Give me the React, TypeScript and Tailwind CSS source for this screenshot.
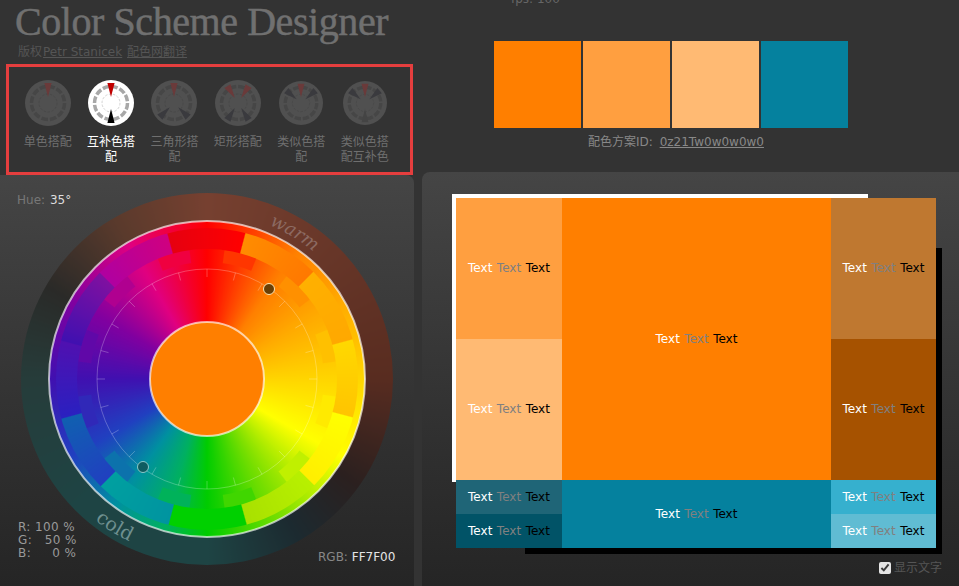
type Rgb = [number, number, number];

const hex = (s: string): Rgb => [
  parseInt(s.slice(1, 3), 16),
  parseInt(s.slice(3, 5), 16),
  parseInt(s.slice(5, 7), 16),
];

const mix = (c0: string, c1: string, k: number) => {
  const x = hex(c0);
  const y = hex(c1);
  return `rgb(${x.map((v, j) => Math.round(v + (y[j] - v) * k)).join(",")})`;
};

const sample = (stops: [number, string][], a: number) => {
  const t = ((a % 360) + 360) % 360;
  for (let i = 0; i < stops.length - 1; i++) {
    const [a0, c0] = stops[i];
    const [a1, c1] = stops[i + 1];
    if (t >= a0 && t <= a1) return mix(c0, c1, (t - a0) / (a1 - a0));
  }
  return stops[0][1];
};

// angles go clockwise from the top of the wheel
const hueStops: [number, string][] = [
  [0, "#ff0000"], [35, "#ff7f00"], [60, "#ffaa00"], [90, "#ffd500"], [120, "#ffff00"],
  [150, "#80e000"], [180, "#00cc00"], [196, "#00b060"], [216, "#0090a0"], [240, "#2040c0"],
  [270, "#4010b0"], [300, "#8000a0"], [330, "#e00080"], [360, "#ff0000"],
];

const ringStops: [number, string][] = [
  [0, "#764030"], [90, "#582c20"], [125, "#2b201f"], [150, "#1c2a30"], [180, "#1e4444"],
  [225, "#1e4444"], [270, "#263c3a"], [300, "#2a2a28"], [330, "#5a3a2c"], [360, "#764030"],
];

// stepped outer band: start and end colour of each 30 degree sector, first one starts at 345
const sectors: [string, string][] = [
  ["#e60010", "#ff0000"], ["#ff8c00", "#ff7800"], ["#ffb000", "#ffa800"], ["#ffd800", "#ffc400"],
  ["#ffff00", "#ffee00"], ["#b8f000", "#a8e000"], ["#00d000", "#00d000"], ["#0094a0", "#00a0a0"],
  ["#2040c0", "#1060b0"], ["#2a20c0", "#5010b0"], ["#4010b0", "#8010a0"], ["#b000a0", "#d0007f"],
];

const outerColor = (a: number) => {
  const off = (a + 15) % 360;
  const i = Math.floor(off / 30) % 12;
  return mix(sectors[i][0], sectors[i][1], (off % 30) / 30);
};

// teeth of flat colour sit on every sector boundary, the rest follows the smooth wheel
const midColor = (a: number) => {
  const off = (((a - 15) % 30) + 30) % 30;
  if (off > 7 && off < 23) return sample(hueStops, a);
  const k = Math.round((a - 15) / 30);
  return sample(hueStops, 15 + k * 30);
};

const conic = (fn: (a: number) => string) => {
  const parts: string[] = [];
  for (let a = 0; a <= 360; a += 0.5) parts.push(`${fn(a)} ${a}deg`);
  return `conic-gradient(${parts.join(",")})`;
};

const polar = (r: number, a: number) => {
  const rad = (a * Math.PI) / 180;
  return [186 + r * Math.sin(rad), 186 - r * Math.cos(rad)];
};

const smooth = conic((a) => sample(hueStops, a));

const discs = [
  { r: 186, bg: conic((a) => sample(ringStops, a)) },
  { r: 158, bg: smooth },
  { r: 151, bg: conic(outerColor) },
  { r: 130, bg: conic(midColor) },
  { r: 117, bg: smooth },
];

function Wheel() {
  return (
    <div className="relative h-[372px] w-[372px]">
      {discs.map((d) => (
        <div
          key={d.r}
          className="absolute rounded-full"
          style={{ left: 186 - d.r, top: 186 - d.r, width: d.r * 2, height: d.r * 2, background: d.bg }}
        />
      ))}
      <svg width="372" height="372" viewBox="0 0 372 372" className="absolute left-0 top-0">
        <circle cx="186" cy="186" r="110" fill="none" stroke="#ffffff" strokeOpacity="0.25" />
        {Array.from({ length: 24 }, (_, i) => {
          const [x0, y0] = polar(110, i * 15);
          const [x1, y1] = polar(102, i * 15);
          return <line key={i} x1={x0} y1={y0} x2={x1} y2={y1} stroke="#ffffff" strokeOpacity="0.25" />;
        })}
        <circle cx="186" cy="186" r="158" fill="none" stroke="#ffffff" strokeOpacity="0.65" strokeWidth="2" />
        <circle cx="186" cy="186" r="57" fill="#ff7f00" stroke="#ffffff" strokeOpacity="0.65" strokeWidth="2" />
        <circle cx="248" cy="96" r="5.5" fill="#6b3f05" stroke="#ffe6b0" />
        <circle cx="122" cy="274" r="5.5" fill="#0f5c60" stroke="#8cc8c8" />
        <defs>
          <path id="warm-arc" d={`M${polar(166, 1).join(" ")}A166 166 0 0 1 ${polar(166, 61).join(" ")}`} />
          <path id="cold-arc" d={`M${polar(180, 242).join(" ")}A180 180 0 0 0 ${polar(180, 182).join(" ")}`} />
        </defs>
        <text fill="#8c6a62" fontSize="18" fontFamily="DejaVu Serif, serif" fontStyle="italic">
          <textPath href="#warm-arc" startOffset="50%" textAnchor="middle">warm</textPath>
        </text>
        <text fill="#6f9090" fontSize="19" fontFamily="DejaVu Serif, serif">
          <textPath href="#cold-arc" startOffset="50%" textAnchor="middle">cold</textPath>
        </text>
      </svg>
    </div>
  );
}

const schemes = [
  { label: "单色搭配", red: [0], dark: [] as number[], size: 46 },
  { label: "互补色搭配", red: [0], dark: [180], active: true, size: 46 },
  { label: "三角形搭配", red: [0], dark: [135, 225], size: 46 },
  { label: "矩形搭配", red: [-32, 32], dark: [148, 212], size: 46 },
  { label: "类似色搭配", red: [0], dark: [-50, 50], size: 44 },
  { label: "类似色搭配互补色", red: [0], dark: [-50, 50, 180], size: 44 },
];

function SchemeIcon({ red, dark, active, size }: { red: number[]; dark: number[]; active?: boolean; size: number }) {
  const tip = (a: number) => {
    const rad = (a * Math.PI) / 180;
    const pt = (r: number, s: number) => [
      23 + r * Math.sin(rad) + s * Math.cos(rad),
      23 - r * Math.cos(rad) + s * Math.sin(rad),
    ];
    return [pt(20, -3.6), pt(20, 3.6), pt(6, 0)].map((p) => p.join(",")).join(" ");
  };
  return (
    <svg width={size} height={size} viewBox="0 0 46 46">
      <circle cx="23" cy="23" r="23" fill={active ? "#ffffff" : "#505050"} />
      <circle cx="23" cy="23" r="16.5" fill="none" stroke={active ? "#a8a8a8" : "#464646"} strokeWidth="3.5" strokeDasharray="6.6 2" />
      <circle cx="23" cy="23" r="9" fill="none" stroke={active ? "#d4d4d4" : "#494949"} strokeDasharray="2.5 1.5" />
      {red.map((a) => (
        <polygon key={a} points={tip(a)} fill={active ? "#c00000" : "#6a3a3a"} />
      ))}
      {dark.map((a) => (
        <polygon key={a} points={tip(a)} fill={active ? "#000000" : a === 180 ? "#444444" : "#3a3a3e"} />
      ))}
    </svg>
  );
}

function Cell({ bg, className }: { bg: string; className: string }) {
  return (
    <div className={`flex items-center justify-center gap-[4.5px] pb-[1px] text-[12px] ${bg} ${className}`}>
      <span className="text-white">Text</span>
      <span className="text-[#808080]">Text</span>
      <span className="text-black">Text</span>
    </div>
  );
}

export default function App() {
  return (
    <div className="flex h-[586px] w-[959px] overflow-hidden bg-[#333333] font-['DejaVu_Sans','Noto_Sans_CJK_SC',sans-serif]">
      <div className="flex w-[414px] shrink-0 flex-col">
        <h1 className="h-[44px] pl-[15px] pt-[1px] font-['Liberation_Serif',serif] text-[40px] leading-[42px] tracking-[-0.43px] text-[#707070] [-webkit-text-stroke:0.5px_#707070]">
          Color Scheme Designer
        </h1>
        <div className="h-[20px] pl-[18px] pt-[1px] text-xs leading-[15px] text-[#555555]">
          版权<span className="ml-[1px] underline">Petr Stanicek</span> <span className="ml-[1px] underline">配色网翻译</span>
        </div>
        <div className="ml-[6px] flex h-[111px] w-[407px] shrink-0 border-[3px] border-[#e53e3e] pl-[7px] pt-[13px]">
          {schemes.map((s) => (
            <div key={s.label} className="flex w-[63.4px] flex-col items-center">
              <div className="flex h-[46px] items-center">
                <SchemeIcon red={s.red} dark={s.dark} active={s.active} size={s.size} />
              </div>
              <div className={`mt-[9px] w-[50px] text-center text-xs leading-[15px] ${s.active ? "text-white" : "text-[#6f6f6f]"}`}>
                {s.label}
              </div>
            </div>
          ))}
        </div>
        <div className="relative flex-1 rounded-tr-lg bg-gradient-to-b from-[#454545] to-[#252525] pl-[21px] pt-[18px]">
          <Wheel />
          <div className="absolute left-[17px] top-[17px] text-xs text-[#777777]">
            Hue: <span className="ml-[1px] text-[#dddddd]">35°</span>
          </div>
          <pre className="absolute left-[18px] top-[346px] font-['DejaVu_Sans',sans-serif] text-xs leading-[13px] tracking-[0.4px] text-[#999999]">
            {"R: 100 %\nG:   50 %\nB:     0 %"}
          </pre>
          <div className="absolute left-[318px] top-[374px] text-xs text-[#888888]">
            RGB: <span className="text-[#e5e5e5]">FF7F00</span>
          </div>
        </div>
      </div>

      <div className="ml-[8px] flex min-w-0 flex-1 flex-col">
        <div className="h-[172px] shrink-0 pl-[72px]">
          <div className="-mt-[9px] h-[50px] pl-[17px] text-xs leading-[16px] text-[#666666]">fps: 100</div>
          <div className="flex gap-[2px]">
            <div className="h-[87px] w-[87px] bg-[#ff7f00]" />
            <div className="h-[87px] w-[87px] bg-[#ff9f40]" />
            <div className="h-[87px] w-[87px] bg-[#ffba73]" />
            <div className="h-[87px] w-[87px] bg-[#05819e]" />
          </div>
          <div className="mt-[6px] pl-[94px] text-xs leading-[16px] text-[#888888]">
            配色方案ID: <span className="ml-[3px] underline">0z21Tw0w0w0w0</span>
          </div>
        </div>
        <div className="flex-1 rounded-tl-lg bg-gradient-to-b from-[#454545] to-[#252525] pl-[34px] pt-[26px]">
          <div className="relative h-[350px] w-[480px]">
            <div className="absolute -left-[4px] -top-[4px] h-[288px] w-[416px] bg-white" />
            <div className="absolute left-[69px] top-[50px] h-[306px] w-[417px] bg-black" />
            <div className="relative grid h-full w-full grid-cols-[106px_269px_105px] grid-rows-[141px_141px_34px_34px]">
              <Cell bg="bg-[#ff9f40]" className="" />
              <Cell bg="bg-[#ff7f00]" className="row-span-2" />
              <Cell bg="bg-[#bf7830]" className="" />
              <Cell bg="bg-[#ffba73]" className="" />
              <Cell bg="bg-[#a65200]" className="" />
              <Cell bg="bg-[#1f6577]" className="" />
              <Cell bg="bg-[#05819e]" className="row-span-2" />
              <Cell bg="bg-[#36b0ce]" className="" />
              <Cell bg="bg-[#015367]" className="" />
              <Cell bg="bg-[#60bcd3]" className="" />
            </div>
          </div>
          <label className="mr-[17px] mt-[12px] flex items-center justify-end gap-[3px] text-xs leading-[16px] text-[#555555]">
            <input type="checkbox" defaultChecked className="m-0 h-3 w-3 accent-[#e5e5e5]" />
            显示文字
          </label>
        </div>
      </div>
    </div>
  );
}
